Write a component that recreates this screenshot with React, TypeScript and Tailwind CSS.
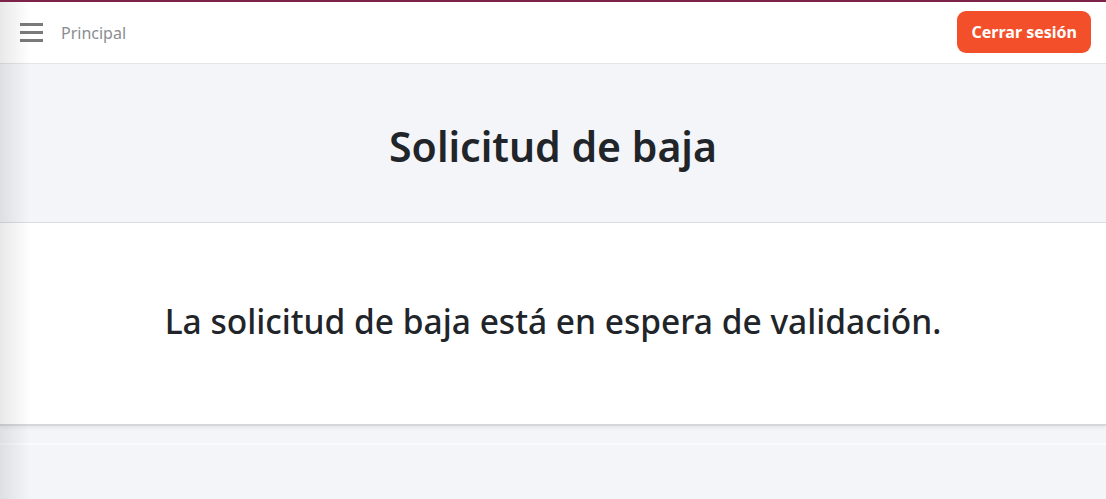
import React from "react"

export default function App() {
  return (
    <div className="relative min-h-[499px] bg-[#f4f5f9] overflow-hidden" style={{ fontFamily: '"Noto Sans", "Open Sans", sans-serif' }}>
      {/* Top accent */}
      <div className="h-[2px] bg-[#7d2248]"></div>

      {/* Header */}
      <header className="h-[62px] bg-white border-b border-[#e3e4e8] flex items-center justify-between pl-[20px] pr-[15px]">
        <div className="flex items-center gap-[18px]">
          <button className="flex flex-col gap-[5px] w-[23px]">
            <span className="block h-[3px] bg-[#7a7a7a]"></span>
            <span className="block h-[3px] bg-[#7a7a7a]"></span>
            <span className="block h-[3px] bg-[#7a7a7a]"></span>
          </button>
          <span className="text-[16px] text-[#8a8d91]">Principal</span>
        </div>
        <button className="h-[42px] px-[14px] rounded-[9px] bg-[#f24f2a] text-white text-[16px] font-bold -mt-[2px]">
          Cerrar sesión
        </button>
      </header>

      {/* Title */}
      <div className="h-[159px] flex items-center justify-center border-b border-[#dcdde2]">
        <h1 className="text-[41px] font-semibold text-[#212529] leading-none pt-[6px]">Solicitud de baja</h1>
      </div>

      {/* Card */}
      <div className="h-[203px] bg-white flex items-center justify-center border-b-2 border-[#d6d7db] shadow-[0_2px_4px_rgba(0,0,0,0.06)]">
        <p className="text-[33.5px] font-medium text-[#212529] leading-none pb-[4px]">La solicitud de baja está en espera de validación.</p>
      </div>

      <div className="h-[17px]"></div>
      <div className="h-[2px] bg-[#fafbfd]"></div>

      {/* Left edge shade */}
      <div className="absolute left-0 top-[2px] bottom-0 w-[30px] bg-gradient-to-r from-[rgba(0,0,0,0.09)] to-transparent pointer-events-none"></div>
    </div>
  )
}
